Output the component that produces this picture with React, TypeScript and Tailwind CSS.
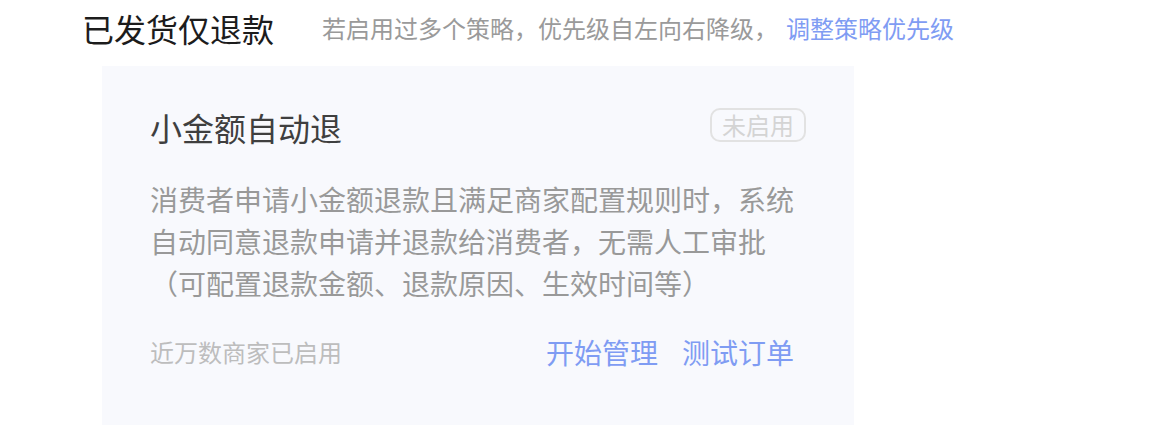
export default function App() {
  const font = { fontFamily: '"Noto Sans CJK SC", "Noto Sans", sans-serif' };
  return (
    <div className="w-[1160px] h-[430px] bg-white overflow-hidden pl-[82px]" style={font}>
      <div className="h-[56px] flex items-center">
        <span className="text-[32px] leading-none text-[#1c1c1c]">已发货仅退款</span>
        <span className="ml-[48px] text-[24px] leading-none text-[#9a9a9a]">
          若启用过多个策略，优先级自左向右降级，
        </span>
        <span className="ml-[8px] text-[24px] leading-none text-[#7f9cf3]">调整策略优先级</span>
      </div>
      <div className="mt-[10px] ml-[20px] w-[752px] h-[359px] bg-[#f8f9fd] pl-[48px] pr-[48px] pt-[39px]">
        <div className="h-[44px] flex items-center justify-between">
          <span className="text-[32px] leading-none text-[#3f3f3f]">小金额自动退</span>
          <span className="h-[34px] -mt-[4px] px-[10px] flex items-center border-2 border-[#e2e2e2] rounded-[10px] text-[24px] leading-none text-[#d4d4d4]">
            未启用
          </span>
        </div>
        <p className="mt-[29px] text-[28px] leading-[42px] text-[#999999]">
          消费者申请小金额退款且满足商家配置规则时，系统自动同意退款申请并退款给消费者，无需人工审批（可配置退款金额、退款原因、生效时间等）
        </p>
        <div className="mt-[28px] h-[40px] flex items-center justify-between">
          <span className="text-[24px] leading-none text-[#bdbdbd]">近万数商家已启用</span>
          <div className="flex items-center gap-[24px] mr-[12px]">
            <span className="text-[28px] leading-none text-[#7f9cf3]">开始管理</span>
            <span className="text-[28px] leading-none text-[#7f9cf3]">测试订单</span>
          </div>
        </div>
      </div>
    </div>
  );
}
